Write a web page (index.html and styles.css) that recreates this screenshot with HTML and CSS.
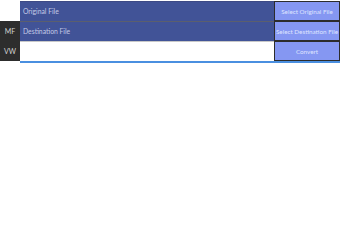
FILE: index.html
```html
<!DOCTYPE html>
<html>
<head>
<meta charset="utf-8">
<link rel="stylesheet" href="styles.css">
</head>
<body>
<div class="app">
  <div class="blank"></div>
  <div class="field blue first">Original File</div>
  <button class="btn">Select Original File</button>
  <div class="side">MF</div>
  <div class="field blue">Destination File</div>
  <button class="btn">Select Destination File</button>
  <div class="side">VW</div>
  <div class="field white"></div>
  <button class="btn">Convert</button>
  <div class="blank"></div>
  <div class="focusline"></div>
</div>
</body>
</html>
```
FILE: styles.css
```css
html, body {
  margin: 0;
  padding: 0;
  background: #ffffff;
}
.app {
  display: grid;
  grid-template-columns: 20px 1fr 66px;
  grid-template-rows: 20px 20px 20px 2px;
  padding-top: 1px;
  font-family: Lato, "Open Sans", sans-serif;
  font-size: 6.8px;
}
.blank { background: #ffffff; }
.side {
  background: #2d2d2d;
  color: #d4d4d4;
  display: flex;
  align-items: center;
  justify-content: center;
  font-size: 7px;
}
.field {
  box-sizing: border-box;
  padding: 5px 0 0 3px;
  color: #c3c9e6;
}
.blue {
  background: #415397;
  border-top: 1px solid #5b5f6e;
}
.first { border-top: 1px solid #3d4a85; }
.white {
  background: #ffffff;
  border-top: 1px solid #c8c8c8;
}
.btn {
  box-sizing: border-box;
  margin: 0;
  padding: 1px 0 0 0;
  background: #8597f2;
  border: 1px solid #2c2c2c;
  color: #dfe4ff;
  font-family: inherit;
  font-size: 6.3px;
  text-align: center;
  white-space: nowrap;
  overflow: hidden;
}
.focusline {
  grid-column: 2 / 4;
  background: #4a8fe0;
  height: 2px;
}
```
